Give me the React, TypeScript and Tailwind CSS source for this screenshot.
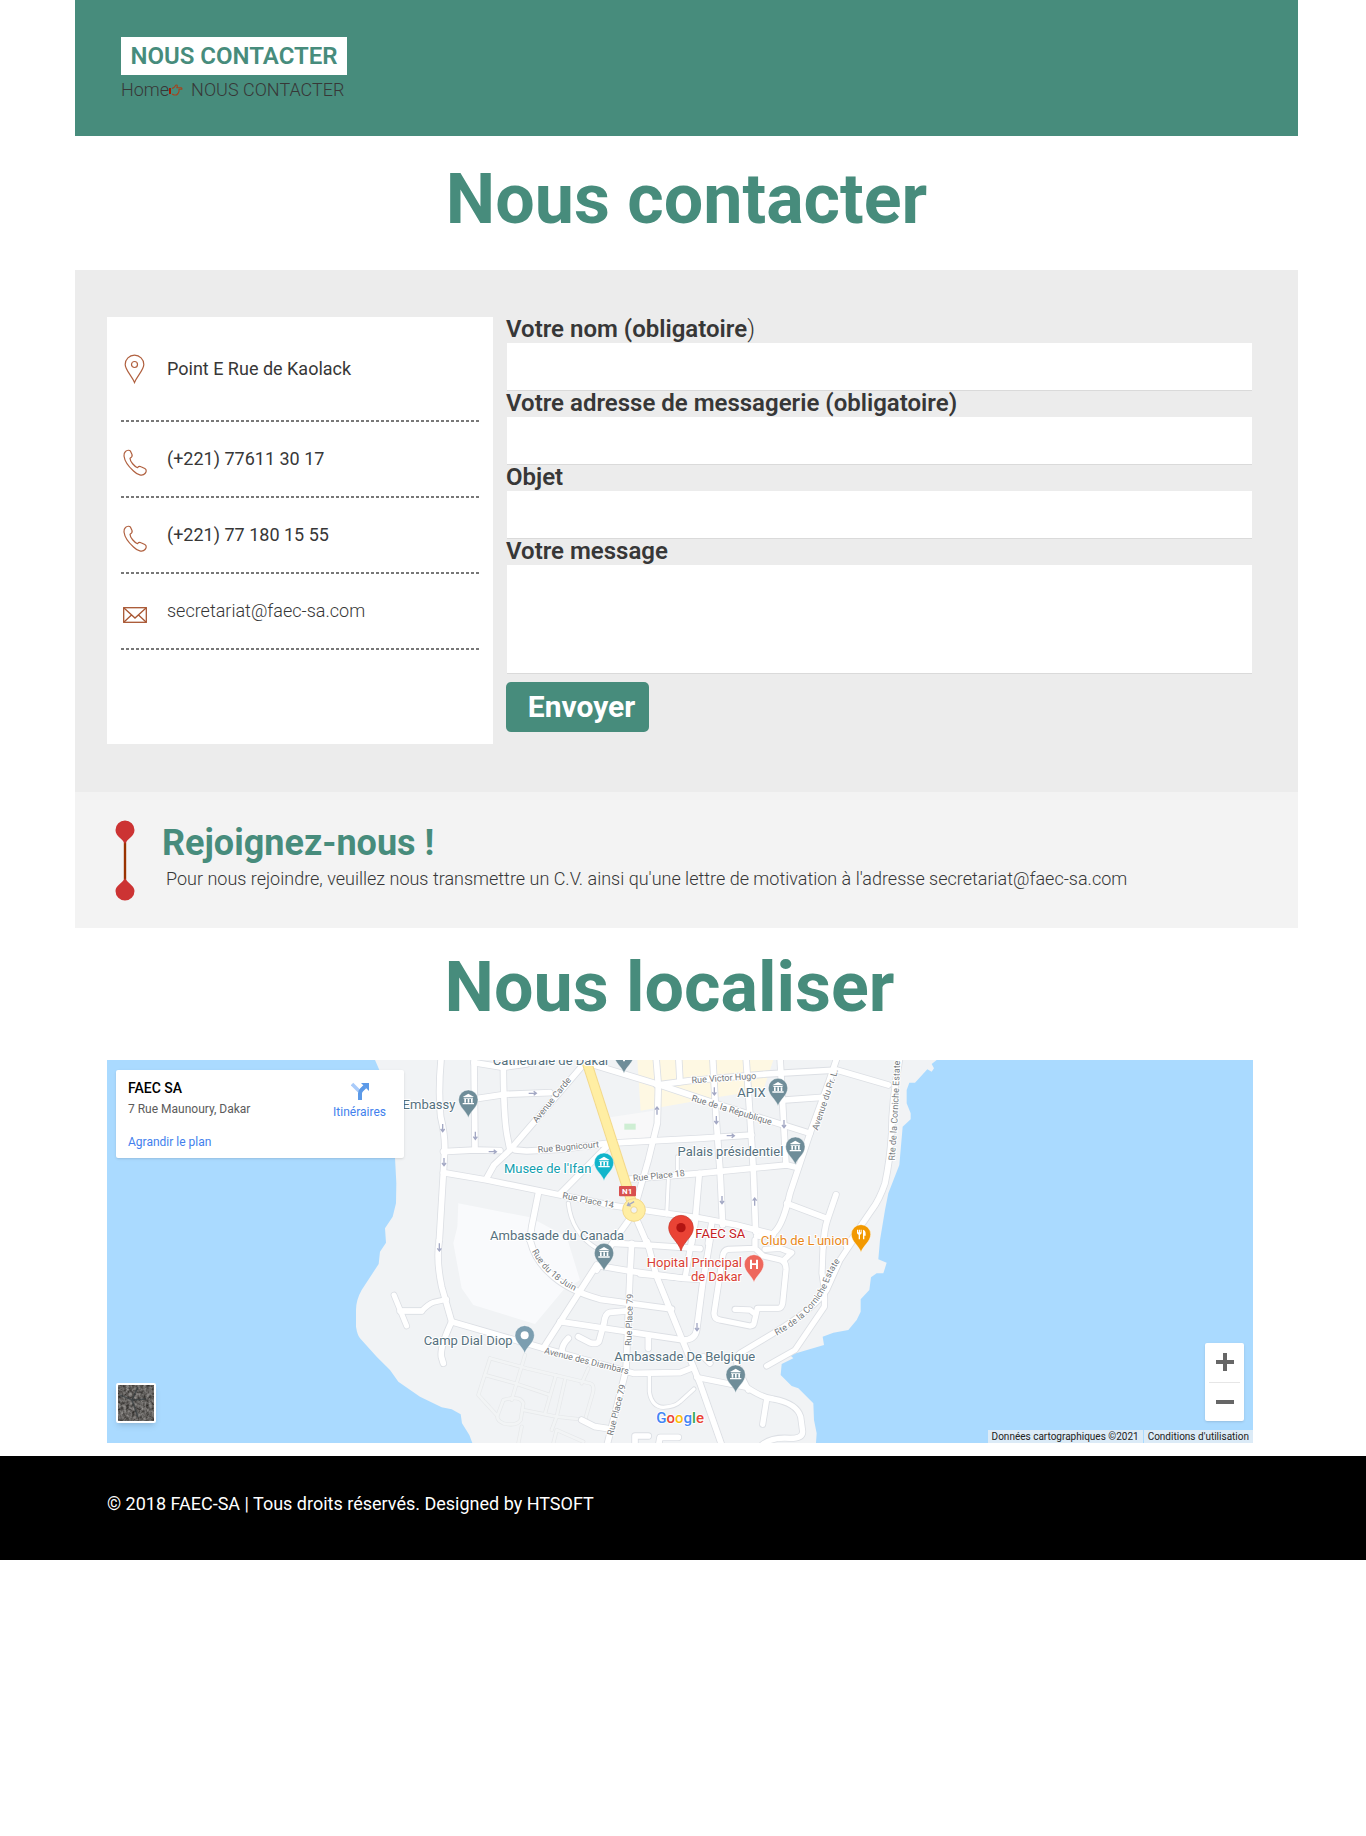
import { useId } from 'react';
import type { ReactNode } from 'react';

const TILES = {
  west: 'translate(0 0)',
  nw: 'translate(900 0)',
  ne: 'translate(1620 0)',
  sw: 'translate(900 570)',
  se: 'translate(1620 570)',
};

type Tile = keyof typeof TILES;

const ROADS: { tile: Tile; w: number; d: string[] }[] = [
  {
    tile: 'west',
    w: 15,
    d: ['M882 735 L920 828', 'M910 783 L965 783 Q985 762 1000 757 L1040 748'],
  },
  {
    tile: 'nw',
    w: 17,
    d: [
      'M124 20 Q114 120 122 200 Q136 260 134 300 L130 370 L118 570',
      'M222 20 L225 300',
      'M310 30 Q310 200 322 260 L330 300',
      'M235 145 L315 133 L450 128',
      'M222 38 L310 52 L380 42',
      'M545 50 L330 300 L282 345 L258 388',
      'M130 305 L225 300 L300 302 M345 300 L380 303 L480 298 L620 280 L770 272 L900 265 L1055 255',
      'M130 368 L260 390 L480 435 L640 467 L780 488 L900 504 L1010 525 L1120 553',
      'M415 430 L395 530 L390 570',
      'M480 432 L620 290',
      'M560 38 L780 105 L960 165 L1230 250',
      'M768 20 L775 105 L772 220 L745 330 L702 480',
      'M836 20 L840 95',
      'M690 387 L900 370 L1160 345 L1190 352',
      'M702 490 L745 590',
      'M690 505 L640 575 L590 660',
      'M640 580 L740 585 L900 596',
    ],
  },
  { tile: 'nw', w: 9, d: ['M805 390 L800 495', 'M832 320 L832 370'] },
  {
    tile: 'ne',
    w: 17,
    d: [
      'M50 105 L150 92 L380 72 L590 60 L745 105',
      'M218 20 L228 200 L240 360 L248 525',
      'M318 20 L330 200 L340 360 L347 545',
      'M420 20 L430 200 L438 345',
      'M435 150 L545 142',
      'M592 20 L565 100 L510 250 L450 430 Q430 520 405 545 Q395 560 350 558',
      'M440 460 L560 505',
      'M588 434 L562 510 Q552 540 550 590',
      'M780 20 Q755 150 755 250 Q750 330 735 400 Q718 450 695 480 L620 590',
      'M178 370 L165 520 L155 580',
      'M215 520 L205 580',
    ],
  },
  {
    tile: 'sw',
    w: 17,
    d: [
      'M118 0 Q108 60 125 140 L155 245',
      'M155 245 Q120 320 124 350 L130 370',
      'M155 245 L430 325 L700 400 L840 398 L880 382',
      'M0 213 L65 213',
      'M390 0 Q405 60 450 100 Q500 150 600 178 L815 207',
      'M590 75 L430 325',
      'M600 78 L700 95 L850 115 L900 118',
      'M695 10 L690 100 L678 390 L620 620',
      'M742 5 L770 110 L900 430 L965 615',
      'M480 245 L600 263 L850 300 Q885 300 890 270 L908 130 L930 0',
      'M690 212 L630 217 Q615 220 612 250 L598 300 Q595 315 570 308 L535 290',
      'M745 295 L745 325',
      'M505 295 Q485 315 486 335',
      'M545 540 L585 560 L620 565',
      'M705 620 L705 588 L745 588',
      'M775 620 L780 592 L835 592',
    ],
  },
  {
    tile: 'sw',
    w: 10,
    d: ['M748 405 L748 455 Q755 500 790 502 Q825 500 840 485 L882 447', 'M505 -110 Q515 -20 590 25'],
  },
  {
    tile: 'se',
    w: 16,
    d: [
      'M155 0 L135 115 L0 102',
      'M345 0 L345 25 L265 28 Q250 30 248 50 L222 220 Q222 238 240 240 L330 258 Q342 258 343 245 L352 205 L415 205 Q425 205 428 190 L438 90 Q440 62 415 58 L370 48 L345 25',
      'M285 208 L330 210 L345 222',
      'M430 62 L455 38 L420 25 L375 28',
      'M550 0 L546 100 Q556 150 553 200 L465 330 L380 378',
      'M640 0 L600 60 L560 150 Q530 200 400 280 L300 340 Q280 355 300 400 L325 450',
      'M170 412 L320 442 Q370 475 400 477 Q470 490 482 530 L488 575 Q488 595 450 595 Q390 590 360 620',
      'M380 478 L368 553',
      'M190 350 L210 370',
    ],
  },
];

const FAINT_ROADS = [
  'M270 355 L380 385 L570 430 Q585 435 578 460 L555 540',
  'M270 355 L235 465 L290 525',
  'M375 345 L335 480',
  'M255 405 L345 430 L450 465',
  'M468 405 L435 520',
  'M495 420 L470 530 L455 570',
  'M310 480 Q360 465 370 490 L362 540 Q350 560 310 550 Q285 540 295 520 Z',
  'M370 510 L470 530 L560 540',
  'M365 560 L355 610',
  'M470 570 L460 610 M470 570 L550 605',
  'M565 385 L545 430',
];

const LAND =
  'M825 30 L838 60 L885 323 L889 400 L888 460 L878 500 L855 535 L858 578 L840 605 L836 642 L785 720 Q768 750 768 780 L768 830 Q772 855 780 865 L830 920 L870 960 L895 995 L960 1040 L1025 1072 L1055 1078 L1082 1093 L1086 1120 L1108 1155 L1117 1179 L2148 1179 L2150 1150 L2142 1110 L2140 1060 L2095 1015 L2075 1008 L2042 975 L2045 942 L2080 925 L2070 915 L2172 885 L2168 860 L2200 848 L2245 840 L2270 810 L2282 785 L2282 748 L2308 720 L2313 682 L2330 670 L2350 670 L2360 638 L2335 628 L2340 570 L2355 480 L2365 430 L2398 345 L2408 230 L2432 208 L2432 190 L2420 160 L2420 120 L2428 98 L2445 98 L2482 58 L2495 65 L2502 55 L2495 42 L2510 30 Z';

function PinShape({ x, y, color, children }: { x: number; y: number; color: string; children: ReactNode }) {
  return (
    <g transform={`translate(${x} ${y})`}>
      <path
        d="M0 54 C-6 34 -29 22 -29 0 A29 29 0 1 1 29 0 C29 22 6 34 0 54 Z"
        fill={color}
        stroke="#ffffff"
        strokeOpacity="0.6"
        strokeWidth="2"
      />
      {children}
    </g>
  );
}

function Civic() {
  return (
    <g fill="#ffffff">
      <path d="M-17 -8 L0 -18 L17 -8 Z" />
      <path d="M-14 -6 h28 v3 h-28 Z M-12 -2 h5 v11 h-5 Z M-2 -2 h5 v11 h-5 Z M8 -2 h5 v11 h-5 Z M-17 10 h34 v4 h-34 Z" />
    </g>
  );
}

function Label({
  x,
  y,
  size = 39,
  color = '#55707d',
  rotate = 0,
  anchor = 'start',
  children,
}: {
  x: number;
  y: number;
  size?: number;
  color?: string;
  rotate?: number;
  anchor?: 'start' | 'end';
  children: ReactNode;
}) {
  return (
    <text
      transform={`translate(${x} ${y}) rotate(${rotate})`}
      fontSize={size}
      fill={color}
      stroke="#ffffff"
      strokeWidth="6"
      strokeLinejoin="round"
      paintOrder="stroke"
      textAnchor={anchor}
    >
      {children}
    </text>
  );
}

function CurvedLabel({ d, children }: { d: string; children: ReactNode }) {
  const id = useId();
  return (
    <>
      <path id={id} d={d} fill="none" />
      <text fontSize="27" fill="#75797d" stroke="#ffffff" strokeWidth="6" strokeLinejoin="round" paintOrder="stroke">
        <textPath href={`#${id}`}>{children}</textPath>
      </text>
    </>
  );
}

function Arrow({ x, y, rotate = 0 }: { x: number; y: number; rotate?: number }) {
  return (
    <path
      transform={`translate(${x} ${y}) rotate(${rotate})`}
      d="M0 -12 V10 M-6 3 L0 11 L6 3"
      fill="none"
      stroke="#a3a8c4"
      strokeWidth="4"
    />
  );
}

function MapDrawing() {
  const street = '#75797d';
  return (
    <svg
      className="block h-full w-full font-[Roboto,sans-serif]"
      viewBox="21 30 3438 1149"
      preserveAspectRatio="xMidYMid slice"
      role="img"
      aria-label="Plan de Dakar autour de FAEC SA"
    >
      <rect x="-3000" y="0" width="9000" height="1300" fill="#aadaff" />
      <path d={LAND} fill="#f1f3f5" />
      <path d="M1075 460 L1290 502 L1400 560 L1440 690 L1390 720 L1305 822 L1120 765 L1085 715 L1060 580 L1072 530 Z" fill="#f9fafc" />
      <path d="M1612 30 L2020 30 L1990 120 L1860 140 L1622 182 Z" fill="#fef8e3" />
      <path d="M1530 202 L1660 182 L1660 260 L1540 275 Z" fill="#f8f8f9" />
      <rect x="1573" y="221" width="34" height="18" fill="#ceeed3" />
      <g transform={TILES.sw} fill="none" strokeLinecap="round" strokeLinejoin="round">
        {FAINT_ROADS.map((d) => (
          <path key={d} d={d} stroke="#e6e8ea" strokeWidth="12" />
        ))}
        {FAINT_ROADS.map((d) => (
          <path key={d} d={d} stroke="#f2f4f5" strokeWidth="8" />
        ))}
      </g>
      {[true, false].map((casing) => (
        <g
          key={String(casing)}
          fill="none"
          stroke={casing ? '#dcdfe4' : '#ffffff'}
          strokeLinecap="round"
          strokeLinejoin="round"
        >
          {ROADS.map((group) => (
            <g key={group.tile + group.w} transform={TILES[group.tile]} strokeWidth={casing ? group.w + 5 : group.w}>
              {group.d.map((d) => (
                <path key={d} d={d} />
              ))}
            </g>
          ))}
        </g>
      ))}
      <path d="M1455 20 L1595 455" stroke="#f3d98b" strokeWidth="31" />
      <path d="M1455 20 L1595 455" stroke="#ffeea3" strokeWidth="25" />
      <circle cx="1602" cy="480" r="34" fill="#ffeea3" stroke="#f3d98b" strokeWidth="3" />
      <circle cx="1602" cy="480" r="10" fill="#f1f3f5" stroke="#f3d98b" strokeWidth="3" />

      <Arrow x={1028} y={234} />
      <Arrow x={1032} y={336} />
      <Arrow x={1018} y={592} />
      <Arrow x={1126} y={257} />
      <Arrow x={1178} y={305} rotate={-90} />
      <Arrow x={1298} y={130} rotate={-90} />
      <Arrow x={1671} y={182} rotate={180} />
      <Arrow x={1843} y={124} />
      <Arrow x={1849} y={210} />
      <Arrow x={1892} y={257} rotate={-90} />
      <Arrow x={2052} y={222} />
      <Arrow x={1866} y={450} />
      <Arrow x={1964} y={455} rotate={180} />
      <Arrow x={1791} y={831} />
      <Arrow x={1592} y={461} rotate={60} />

      <Label x={1310} y={220} size={27} color={street} rotate={-51}>Avenue Carde</Label>
      <Label x={1314} y={308} size={27} color={street} rotate={-5}>Rue Bugnicourt</Label>
      <Label x={1386} y={445} size={27} color={street} rotate={11}>Rue Place 14</Label>
      <Label x={1600} y={394} size={27} color={street} rotate={-6}>Rue Place 18</Label>
      <Label x={1775} y={100} size={27} color={street} rotate={-4}>Rue Victor Hugo</Label>
      <Label x={1773} y={152} size={27} color={street} rotate={17}>Rue de la République</Label>
      <CurvedLabel d="M2153 242 L2210 75 L2235 -20">Avenue du Pr. L.</CurvedLabel>
      <CurvedLabel d="M2384 332 Q2396 180 2402 -40">Rte de la Corniche Estate</CurvedLabel>
      <CurvedLabel d="M1295 604 Q1340 690 1450 735">Rue du 18 Juin</CurvedLabel>
      <Label x={1594} y={888} size={27} color={street} rotate={-88}>Rue Place 79</Label>
      <Label x={1539} y={1158} size={27} color={street} rotate={-76}>Rue Place 79</Label>
      <Label x={1331} y={910} size={27} color={street} rotate={14}>Avenue des Diambars</Label>
      <CurvedLabel d="M2030 857 Q2140 800 2185 700 Q2200 650 2250 600">Rte de la Corniche Estate</CurvedLabel>

      <Label x={1178} y={46}>Cathédrale de Dakar</Label>
      <PinShape x={1572} y={16} color="#6f8d99"><path d="M-3 -10 h6 v28 h-6 Z M-9 2 h18 v5 h-18 Z" fill="#ffffff" /></PinShape>
      <Label x={1066} y={178} anchor="end">Embassy</Label>
      <PinShape x={1105} y={149} color="#6f8d99"><Civic /></PinShape>
      <Label x={1474} y={368} anchor="end" color="#129eaf">Musee de l&apos;Ifan</Label>
      <PinShape x={1512} y={338} color="#12b5cb"><Civic /></PinShape>
      <Label x={1997} y={142} anchor="end">APIX</Label>
      <PinShape x={2034} y={114} color="#6f8d99"><Civic /></PinShape>
      <Label x={2050} y={318} anchor="end">Palais présidentiel</Label>
      <PinShape x={2086} y={290} color="#6f8d99"><Civic /></PinShape>
      <Label x={1170} y={569}>Ambassade du Canada</Label>
      <PinShape x={1512} y={609} color="#6f8d99"><Civic /></PinShape>
      <Label x={1238} y={885} anchor="end">Camp Dial Diop</Label>
      <PinShape x={1274} y={856} color="#7c9eb0"><circle r="12" fill="#ffffff" /></PinShape>
      <Label x={1543} y={933}>Ambassade De Belgique</Label>
      <PinShape x={1907} y={974} color="#6f8d99"><Civic /></PinShape>
      <Label x={2247} y={584} anchor="end" color="#e8881a">Club de L&apos;union</Label>
      <PinShape x={2283} y={553} color="#f29900">
        <path d="M-12 -14 v9 q0 5 5 6 v14 h4 v-14 q5 -1 5 -6 v-9 h-3 v8 h-2 v-8 h-3 v8 h-2 v-8 Z M6 -14 q8 2 8 12 v6 h-4 v11 h-4 Z" fill="#ffffff" />
      </PinShape>
      <Label x={1926} y={652} anchor="end" color="#d93f35">Hopital Principal</Label>
      <Label x={1926} y={692} anchor="end" color="#d93f35">de Dakar</Label>
      <PinShape x={1962} y={643} color="#ee675c">
        <path d="M-12 -14 h6 v11 h12 v-11 h6 v28 h-6 v-12 h-12 v12 h-6 Z" fill="#ffffff" />
      </PinShape>
      <rect x="1557" y="408" width="51" height="31" rx="3" fill="#d8504f" />
      <text x="1566" y="433" fontSize="24" fontWeight="700" fill="#ffffff">N1</text>
      <path
        d="M1743 603 C1736 575 1706 560 1706 533 A37 37 0 1 1 1780 533 C1780 560 1750 575 1743 603 Z"
        fill="#ea4335"
        stroke="#c5362b"
        strokeWidth="2"
      />
      <circle cx="1743" cy="533" r="14" fill="#b31412" />
      <Label x={1786} y={563} color="#c5221f">FAEC SA</Label>
      <text x="1669" y="1120" fontSize="45" fontWeight="500" stroke="#ffffff" strokeWidth="5" paintOrder="stroke">
        <tspan fill="#4285f4">G</tspan>
        <tspan fill="#ea4335">o</tspan>
        <tspan fill="#fbbc05">o</tspan>
        <tspan fill="#4285f4">g</tspan>
        <tspan fill="#34a853">l</tspan>
        <tspan fill="#ea4335">e</tspan>
      </text>
    </svg>
  );
}

function SatelliteThumb() {
  return (
    <svg viewBox="0 0 36 36" className="block size-9" aria-hidden="true">
      <filter id="ground" colorInterpolationFilters="sRGB">
        <feTurbulence type="fractalNoise" baseFrequency="0.35" numOctaves="3" seed="4" />
        <feColorMatrix values="0.6 0 0 0 0.09  0.6 0 0 0 0.08  0.6 0 0 0 0.07  0 0 0 0 1" />
      </filter>
      <rect width="36" height="36" fill="#5f5d5a" />
      <rect width="36" height="36" filter="url(#ground)" />
      <path d="M2 10 L14 15 L28 14 M14 15 L20 32 M14 15 L20 2" fill="none" stroke="#343c3e" strokeWidth="1.500" strokeOpacity="0.7" />
    </svg>
  );
}

function LocationIcon() {
  return (
    <svg viewBox="0 0 24 30" className="h-[30px] w-6" fill="none" stroke="#b0603f" strokeWidth="1.2" aria-hidden="true">
      <path d="M11.500 28.500 C9 22 2.200 16 2.200 10.500 A9.300 9.300 0 0 1 20.800 10.500 C20.800 16 14 22 11.500 28.500 Z" />
      <circle cx="11.500" cy="10.500" r="3" />
    </svg>
  );
}

function PhoneIcon() {
  return (
    <svg viewBox="0 0 24 28" className="h-7 w-6" fill="none" stroke="#b0603f" strokeWidth="1.2" strokeLinejoin="round" aria-hidden="true">
      <path d="M2.500 2.500 C4 1 6.500 .8 7.500 2.200 L9 5.500 C9.500 7 8.500 8.500 7 9.300 C7 12.500 11.500 17.500 14.500 18.700 C15.500 17.500 17 17.300 18 17.800 L21.800 19.500 C24 20.800 23.300 23 22 24.500 C19.500 27.500 14.500 26 10.500 22 C5.500 17.500 1.500 11 1 7 C.8 5 1 3.800 2.500 2.500 Z" />
    </svg>
  );
}

function MailIcon() {
  return (
    <svg viewBox="0 0 24 16" className="h-4 w-6" fill="none" stroke="#a85632" strokeWidth="1.3" aria-hidden="true">
      <rect x=".7" y=".7" width="22.600" height="14.600" />
      <path d="M1 1 L12 11 L23 1 M1 15 L8.500 8 M23 15 L15.500 8" />
    </svg>
  );
}

function HandIcon() {
  return (
    <svg viewBox="0 0 14 12" className="h-3 w-3.5" fill="none" stroke="#a8401a" strokeWidth="1.1" strokeLinejoin="round" aria-hidden="true">
      <path d="M1 4 V10" stroke="#a61c00" strokeWidth="2" />
      <path d="M3 4.500 L5 3.500 L7 1 Q8.500 .8 8.300 2.300 L7.800 3.700 H12 Q13.300 4 12.800 5.200 H10 V7.500 L9 9.500 L7.500 11 H5 L3 10" />
    </svg>
  );
}

function JoinMarker() {
  return (
    <svg viewBox="0 0 22 82" className="h-[82px] w-[22px]" aria-hidden="true">
      <path d="M11 18 V64" stroke="#993300" strokeWidth="2.400" />
      <path
        d="M11 24 C9 19 1.500 16.500 1.500 10 A9.500 9.500 0 0 1 20.500 10 C20.500 16.500 13 19 11 24 Z M11 58 C9 63 1.500 65.500 1.500 71 A9.500 9.500 0 0 0 20.500 71 C20.500 65.500 13 63 11 58 Z"
        fill="#cc3333"
      />
    </svg>
  );
}

function DashedRule() {
  return (
    <div className="h-0.5 bg-[repeating-linear-gradient(90deg,#777777_0_3px,#ffffff_3px_5px)]" />
  );
}

function ContactRow({ icon, children }: { icon: ReactNode; children: ReactNode }) {
  return (
    <>
      <div className="flex h-[74px] items-center gap-5">
        <span className="ml-0.5 flex w-6 pt-2">{icon}</span>
        {children}
      </div>
      <DashedRule />
    </>
  );
}

const fieldClass =
  'ml-px block h-12 w-full border-b border-[#dadada] bg-white px-3 text-lg outline-none focus:ring-1 focus:ring-[#478c7c]';
const labelClass = 'block h-[26px] text-2xl leading-6 font-semibold';

export default function App() {
  return (
    <div className="min-h-screen bg-white font-[Roboto,sans-serif] text-[#373737]">
      <div className="mr-[68px] ml-[75px]">
        <header className="bg-[#478c7c] pt-[37px] pb-[34px] pl-[46px]">
          <h2 className="flex h-[38px] w-[226px] items-center justify-center bg-white text-2xl font-semibold whitespace-nowrap text-[#478c7c]">
            NOUS CONTACTER
          </h2>
          <nav className="flex h-[27px] items-center pt-0.5 text-lg font-light" aria-label="Fil d'Ariane">
            <a href="#home">Home</a>
            <HandIcon />
            <span className="ml-2">NOUS CONTACTER</span>
          </nav>
        </header>

        <main>
          <h1 className="pt-[22px] pb-[30px] text-center text-[70px] leading-[82px] font-bold text-[#478c7c]">
            Nous contacter
          </h1>

          <section className="flex gap-[13px] bg-[#ececec] pt-[47px] pr-[47px] pb-12 pl-8">
            <address className="w-[386px] shrink-0 bg-white px-3.5 text-lg not-italic">
              <div className="flex h-[103px] items-center gap-5">
                <span className="ml-0.5 flex w-6"><LocationIcon /></span>
                Point E Rue de Kaolack
              </div>
              <DashedRule />
              <ContactRow icon={<PhoneIcon />}>
                <a href="tel:+221776113017">(+221) 77611 30 17</a>
              </ContactRow>
              <ContactRow icon={<PhoneIcon />}>
                <a href="tel:+221771801555">(+221) 77 180 15 55</a>
              </ContactRow>
              <ContactRow icon={<MailIcon />}>
                <a href="mailto:secretariat@faec-sa.com" className="font-light">secretariat@faec-sa.com</a>
              </ContactRow>
            </address>

            <form className="flex-1" onSubmit={(event) => event.preventDefault()}>
              <label htmlFor="nom" className={labelClass}>
                Votre nom (obligatoire<span className="font-light">)</span>
              </label>
              <input id="nom" type="text" required className={fieldClass} />
              <label htmlFor="email" className={labelClass}>Votre adresse de messagerie (obligatoire)</label>
              <input id="email" type="email" required className={fieldClass} />
              <label htmlFor="objet" className={labelClass}>Objet</label>
              <input id="objet" type="text" className={fieldClass} />
              <label htmlFor="message" className={labelClass}>Votre message</label>
              <textarea
                id="message"
                className="ml-px block h-[109px] w-full resize-none border-b border-[#dadada] bg-white px-3 text-lg outline-none focus:ring-1 focus:ring-[#478c7c]"
              />
              <button
                type="submit"
                className="mt-2 mb-3 flex h-[50px] w-[143px] items-center justify-center rounded-[5px] bg-[#478c7c] pl-2 text-3xl font-bold text-white"
              >
                Envoyer
              </button>
            </form>
          </section>

          <section className="flex gap-[26px] bg-[#f3f3f3] pt-7 pb-[26px] pl-[39px]">
            <JoinMarker />
            <div>
              <h2 className="text-4xl leading-[46px] font-bold text-[#478c7c]">Rejoignez-nous !</h2>
              <p className="pl-1 text-lg leading-[26px] font-light">
                Pour nous rejoindre, veuillez nous transmettre un C.V. ainsi qu&apos;une lettre de motivation à l&apos;adresse
                secretariat@faec-sa.com
              </p>
            </div>
          </section>

          <h2 className="pt-[18px] pr-[34px] pb-8 text-center text-[70px] leading-[82px] font-bold text-[#478c7c]">
            Nous localiser
          </h2>

          <section className="relative mr-[45px] ml-8 h-[383px] overflow-hidden" aria-label="Nous localiser">
            <MapDrawing />
            <div className="absolute top-2.5 left-[9px] flex h-[88px] w-[288px] justify-between rounded-xs bg-white py-2 pr-[18px] pl-3 text-xs shadow-sm">
              <div>
                <p className="text-sm leading-5 font-medium text-black">FAEC SA</p>
                <p className="leading-[22px] text-[#5b5b5b]">7 Rue Maunoury, Dakar</p>
                <a href="#plan" className="mt-3 block leading-5 text-[#427fed]">Agrandir le plan</a>
              </div>
              <a href="#itineraires" className="flex flex-col items-center text-[#427fed]">
                <svg viewBox="0 0 18 18" className="mt-1 size-[18px]" fill="none" aria-hidden="true">
                  <path d="M1 2 L8 9" stroke="#a9cbfa" strokeWidth="3.500" />
                  <path d="M9 18 V11.500 Q9 9.500 10.500 8 L14 4.500" stroke="#5c9ae8" strokeWidth="4" />
                  <path d="M10 1 H18 V9 Z" fill="#5c9ae8" />
                </svg>
                <span className="leading-6">Itinéraires</span>
              </a>
            </div>
            <button
              type="button"
              aria-label="Vue satellite"
              className="absolute bottom-5 left-[9px] rounded-xs border-2 border-white bg-white shadow-md"
            >
              <SatelliteThumb />
            </button>
            <div className="absolute right-[9px] bottom-[22px] flex h-[78px] w-[39px] flex-col rounded-xs bg-white shadow-sm">
              <button type="button" aria-label="Zoom avant" className="flex flex-1 items-center justify-center">
                <svg viewBox="0 0 18 18" className="size-[18px]" aria-hidden="true">
                  <path d="M9 0 V18 M0 9 H18" stroke="#666666" strokeWidth="4" />
                </svg>
              </button>
              <span className="mx-1 h-px bg-[#e6e6e6]" />
              <button type="button" aria-label="Zoom arrière" className="flex flex-1 items-center justify-center">
                <svg viewBox="0 0 18 18" className="size-[18px]" aria-hidden="true">
                  <path d="M0 9 H18" stroke="#666666" strokeWidth="4" />
                </svg>
              </button>
            </div>
            <div className="absolute right-0 bottom-0 flex h-[13px] items-center bg-[#dcebf7] text-[10px] leading-[13px] text-[#222222]">
              <span className="px-1">Données cartographiques ©2021</span>
              <a href="#conditions" className="border-l border-[#aadaff] px-1">Conditions d&apos;utilisation</a>
            </div>
          </section>
        </main>
      </div>

      <footer className="mt-[13px] h-[104px] bg-black pt-[34px] pl-[107px] text-lg leading-7 text-white">
        © 2018 FAEC-SA | Tous droits réservés. Designed by HTSOFT
      </footer>
    </div>
  );
}
